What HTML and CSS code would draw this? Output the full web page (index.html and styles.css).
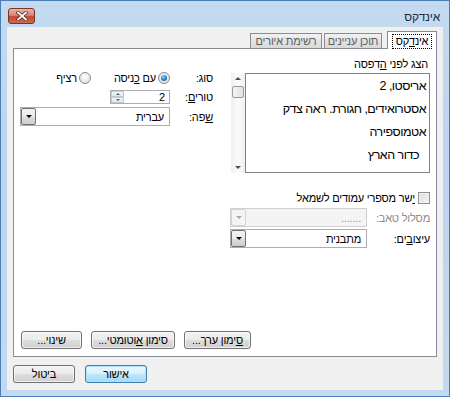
FILE: index.html
```html
<!DOCTYPE html>
<html lang="he" dir="rtl">
<head>
  <meta charset="UTF-8" />
  <title>אינדקס</title>
  <link rel="stylesheet" href="styles.css">
</head>
<body>

  <div class="window">
    <!-- Title bar -->
    <div class="titlebar">
      <span class="title">אינדקס</span>
      <span class="close-btn">
        <svg width="12" height="10" viewBox="0 0 12 10">
          <path d="M2 1.5 L10 8.5 M10 1.5 L2 8.5" stroke="#5a2a24" stroke-width="3.4" stroke-linecap="square"/>
          <path d="M2 1.5 L10 8.5 M10 1.5 L2 8.5" stroke="#ffffff" stroke-width="1.8" stroke-linecap="square"/>
        </svg>
      </span>
    </div>

    <div class="client">
      <!-- Tabs -->
      <div class="tabs">
        <div class="tab active"><span class="focus">אינ<u>ד</u>קס</span></div>
        <div class="tab tab-toc">תוכן עניינים</div>
        <div class="tab tab-fig">רשימת איורים</div>
      </div>

      <div class="panel">
        <div class="top-row">
          <div class="preview-col">
            <div class="caption">הצג לפני <u>ה</u>דפסה</div>
            <div class="preview-wrap">
              <div class="preview">
                <div class="entry">אריסטו, 2</div>
                <div class="entry">אסטרואידים, חגורת. ראה צדק</div>
                <div class="entry">אטמוספירה</div>
                <div class="entry sub">כדור הארץ</div>
              </div>
              <div class="vscroll">
                <span class="arrow-up"></span>
                <span class="thumb"></span>
                <span class="arrow-down"></span>
              </div>
            </div>
          </div>

          <div class="options">
            <div class="opt-row row-type">
              <span class="opt-label">סוג:</span>
              <div class="radios">
                <span class="radio"><span class="radio-dot checked"></span><span>עם <u>כ</u>ניסה</span></span>
                <span class="radio"><span class="radio-dot"></span><span>רציף</span></span>
              </div>
            </div>
            <div class="opt-row row-cols">
              <span class="opt-label">טורי<u>ם</u>:</span>
              <div class="spinbox">
                <span class="spin-value">2</span>
                <span class="spin-btns">
                  <span class="spin-btn"><span class="tri-up"></span></span>
                  <span class="spin-btn"><span class="tri-down"></span></span>
                </span>
              </div>
            </div>
            <div class="opt-row row-lang">
              <span class="opt-label"><u>ש</u>פה:</span>
              <div class="combo wide">
                <span class="combo-text">עברית</span>
                <span class="combo-btn"><span class="tri-down dark"></span></span>
              </div>
            </div>
          </div>
        </div>

        <div class="lower">
          <div class="check-row">
            <span class="checkbox"></span>
            <span><u>י</u>שר מספרי עמודים לשמאל</span>
          </div>
          <div class="field-row row-leader">
            <span class="field-label disabled">מסלול טאב:</span>
            <div class="combo disabled">
              <span class="combo-text">.......</span>
              <span class="combo-btn"><span class="tri-down"></span></span>
            </div>
          </div>
          <div class="field-row row-formats">
            <span class="field-label">עיצו<u>ב</u>ים:</span>
            <div class="combo">
              <span class="combo-text">מתבנית</span>
              <span class="combo-btn"><span class="tri-down dark"></span></span>
            </div>
          </div>
        </div>

        <div class="panel-buttons">
          <span class="btn btn-mark"><span><u>ס</u>ימון ערך...</span></span>
          <span class="btn btn-auto"><span>סימון <u>א</u>וטומטי...</span></span>
          <span class="btn btn-modify"><span>שינוי...</span></span>
        </div>
      </div>

      <div class="dialog-buttons">
        <span class="btn btn-dialog default"><span>אישור</span></span>
        <span class="btn btn-dialog"><span>ביטול</span></span>
      </div>
    </div>
  </div>

</body>
</html>
```

FILE: styles.css
```css
html, body {
  margin: 0;
  padding: 0;
  width: 100%;
  height: 100%;
  background-color: #ffffff;
  font-family: "Liberation Sans", "DejaVu Sans", sans-serif;
  font-size: 11px;
  letter-spacing: -0.2px;
  color: #000000;
}

u {
  text-decoration: underline;
  text-underline-offset: 1px;
}

.window {
  box-sizing: border-box;
  width: 450px;
  height: 397px;
  border: 1px solid #4a7fb5;
  background: linear-gradient(to bottom, #c4daf1 0%, #bcd4ee 40%, #c3d9ef 100%);
  display: flex;
  flex-direction: column;
}

/* title bar */
.titlebar {
  height: 26px;
  flex-shrink: 0;
  display: flex;
  justify-content: space-between;
  align-items: flex-start;
  padding: 0 9px 0 7px;
}

.title {
  margin-top: 9px;
  line-height: 14px;
  font-size: 12px;
  color: #1e2b3a;
}

.close-btn {
  box-sizing: border-box;
  margin-top: 7px;
  width: 27px;
  height: 16px;
  border: 1px solid #7a3328;
  border-radius: 3px;
  background: linear-gradient(to bottom, #eab4a8 0%, #d98470 45%, #c4462e 55%, #cf6a4e 100%);
  display: flex;
  align-items: center;
  justify-content: center;
}

.close-btn svg {
  display: block;
}

.client {
  flex: 1;
  margin: 0 6px 6px;
  background-color: #f0f0f0;
  display: flex;
  flex-direction: column;
  padding: 4px 6px 7px;
}

/* tabs */
.tabs {
  height: 17px;
  display: flex;
  align-items: flex-end;
  position: relative;
  z-index: 1;
}

.tab {
  box-sizing: border-box;
  height: 15px;
  border: 1px solid #898c95;
  border-bottom: none;
  background: linear-gradient(to bottom, #f2f2f2 0%, #e3e3e3 50%, #d9d9d9 100%);
  color: #5c5c5c;
  line-height: 14px;
  text-align: center;
}

.tab-toc {
  width: 58px;
  margin-right: 5px;
}

.tab-fig {
  width: 72px;
  margin-right: 2px;
}

.tab.active {
  width: 50px;
  height: 18px;
  margin-bottom: -1px;
  background: #ffffff;
  color: #000000;
  padding: 2px 0 0;
}

.focus {
  display: inline-block;
  border: 1px dotted #000000;
  padding: 0 3px;
  line-height: 13px;
}

.panel {
  flex: 1;
  background-color: #ffffff;
  border: 1px solid #898c95;
  padding: 8px 6px 7px;
  display: flex;
  flex-direction: column;
}

.top-row {
  display: flex;
  gap: 17px;
}

.preview-col {
  width: 200px;
}

.caption {
  line-height: 14px;
  padding-right: 2px;
  margin-bottom: 2px;
}

.preview-wrap {
  display: flex;
  height: 100px;
}

.preview {
  box-sizing: border-box;
  flex: 1;
  border: 1px solid #828282;
  padding: 1px 3px 0 0;
  font-size: 12.5px;
  letter-spacing: -0.5px;
  overflow: hidden;
}

.entry {
  line-height: 23px;
}

.entry.sub {
  padding-right: 7px;
}

.vscroll {
  width: 14px;
  margin-left: 1px;
  background: linear-gradient(to right, #f0f0f0, #fbfbfb 50%, #f0f0f0);
  display: flex;
  flex-direction: column;
  align-items: center;
}

.arrow-up {
  margin-top: 4px;
  width: 0;
  height: 0;
  border-left: 3px solid transparent;
  border-right: 3px solid transparent;
  border-bottom: 3px solid #4d4d4d;
}

.thumb {
  box-sizing: border-box;
  margin-top: 6px;
  width: 12px;
  height: 12px;
  border: 1px solid #9a9a9a;
  border-radius: 2px;
  background: linear-gradient(to right, #f3f3f3, #e2e2e2);
}

.arrow-down {
  margin-top: auto;
  margin-bottom: 4px;
  width: 0;
  height: 0;
  border-left: 3px solid transparent;
  border-right: 3px solid transparent;
  border-top: 3px solid #4d4d4d;
}

/* options column */
.options {
  width: 193px;
  margin-top: 14px;
}

.opt-row {
  display: flex;
  align-items: center;
  gap: 5px;
}

.opt-label {
  width: 38px;
  flex-shrink: 0;
}

.row-type {
  height: 14px;
}

.row-cols {
  height: 14px;
  margin-top: 5px;
}

.row-lang {
  height: 19px;
  margin-top: 3px;
}

.radios {
  display: flex;
  gap: 23px;
  align-items: center;
}

.radio {
  display: flex;
  align-items: center;
  gap: 2px;
}

.radio-dot {
  box-sizing: border-box;
  width: 12px;
  height: 12px;
  border-radius: 50%;
  border: 1px solid #8b8b8b;
  background: radial-gradient(circle at 50% 40%, #ffffff 0%, #e4e4e4 70%, #cfcfcf 100%);
  position: relative;
}

.radio-dot.checked::after {
  content: "";
  position: absolute;
  top: 2px;
  left: 2px;
  width: 6px;
  height: 6px;
  border-radius: 50%;
  background: radial-gradient(circle at 40% 35%, #9fdcff 0%, #2a8dd6 45%, #14497e 100%);
}

.spinbox {
  box-sizing: border-box;
  width: 60px;
  height: 14px;
  border: 1px solid #abadb3;
  background: #ffffff;
  display: flex;
  align-items: center;
  justify-content: space-between;
}

.spin-value {
  padding-right: 4px;
  line-height: 12px;
}

.spin-btns {
  width: 13px;
  height: 12px;
  display: flex;
  flex-direction: column;
}

.spin-btn {
  flex: 1;
  box-sizing: border-box;
  border: 1px solid #c3cad3;
  background: linear-gradient(to bottom, #f4f6f9, #e0e6ee);
  display: flex;
  align-items: center;
  justify-content: center;
}

.tri-up {
  width: 0;
  height: 0;
  border-left: 2px solid transparent;
  border-right: 2px solid transparent;
  border-bottom: 2px solid #4d6185;
}

.tri-down {
  width: 0;
  height: 0;
  border-left: 3px solid transparent;
  border-right: 3px solid transparent;
  border-top: 3px solid #a8a8a8;
}

.spin-btn .tri-down {
  border-left-width: 2px;
  border-right-width: 2px;
  border-top: 2px solid #4d6185;
}

.tri-down.dark {
  border-top-color: #000000;
}

/* combos */
.combo {
  box-sizing: border-box;
  width: 137px;
  height: 19px;
  border: 1px solid #abadb3;
  background: #ffffff;
  display: flex;
  align-items: center;
  justify-content: space-between;
}

.combo.wide {
  width: 150px;
}

.combo-text {
  padding-right: 5px;
}

.combo-btn {
  box-sizing: border-box;
  width: 15px;
  height: 17px;
  border: 1px solid #707070;
  border-radius: 2px;
  background: linear-gradient(to bottom, #f2f2f2 0%, #ebebeb 50%, #dddddd 51%, #cfcfcf 100%);
  display: flex;
  align-items: center;
  justify-content: center;
}

.combo.disabled {
  background: #f4f4f4;
  border-color: #d0d0d0;
  color: #8d8d8d;
}

.combo.disabled .combo-btn {
  border-color: #d5d5d5;
  background: #f4f4f4;
}

/* lower fields */
.lower {
  width: 200px;
  margin-top: 18px;
}

.check-row {
  height: 13px;
  display: flex;
  align-items: center;
  gap: 3px;
}

.checkbox {
  box-sizing: border-box;
  width: 12px;
  height: 12px;
  border: 1px solid #8e8f8f;
  background: linear-gradient(135deg, #dcdcdc, #f6f6f6);
  box-shadow: inset 0 0 0 1px #f4f4f4;
}

.field-row {
  display: flex;
  align-items: center;
  justify-content: space-between;
}

.row-leader {
  margin-top: 4px;
}

.row-formats {
  margin-top: 2px;
}

.field-label.disabled {
  color: #8d8d8d;
}

/* buttons */
.btn {
  box-sizing: border-box;
  height: 18px;
  border: 1px solid #707070;
  border-radius: 3px;
  background: linear-gradient(to bottom, #f2f2f2 0%, #ebebeb 50%, #dddddd 51%, #cfcfcf 100%);
  box-shadow: inset 0 0 0 1px rgba(255, 255, 255, 0.7);
  display: flex;
  align-items: center;
  justify-content: center;
  line-height: 14px;
}

.panel-buttons {
  margin-top: auto;
  display: flex;
  justify-content: flex-end;
  gap: 9px;
  padding-left: 1px;
}

.btn-mark {
  width: 67px;
}

.btn-auto {
  width: 84px;
}

.btn-modify {
  width: 61px;
}

.dialog-buttons {
  margin-top: 8px;
  display: flex;
  justify-content: flex-end;
  gap: 10px;
}

.btn-dialog {
  width: 62px;
}

.btn.default {
  border-color: #3c7fb1;
  background: linear-gradient(to bottom, #eaf6fd 0%, #d9f0fc 50%, #bee6fd 51%, #a7d9f5 100%);
  box-shadow: inset 0 0 0 1px #b3e0f9;
}
```
